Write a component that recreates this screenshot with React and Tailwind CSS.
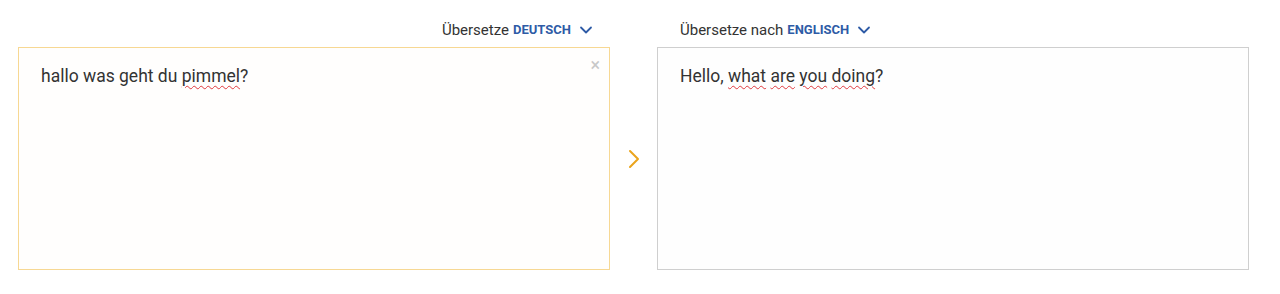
import React from "react";

const Chevron = () => (
  <svg width="14" height="14" viewBox="0 0 14 14" className="ml-[8px]" fill="none">
    <path d="M2 4.5 L7 9.5 L12 4.5" stroke="#2e5ba6" strokeWidth="1.8" strokeLinecap="round" strokeLinejoin="round" />
  </svg>
);

const Spell = ({ children }) => (
  <span className="underline decoration-wavy decoration-[#e0393e] decoration-1 underline-offset-[3px]">{children}</span>
);

export default function App() {
  return (
    <div className="w-[1280px] h-[294px] bg-white pl-[18px] pt-[20px]" style={{ fontFamily: "Roboto, 'Liberation Sans', sans-serif" }}>
      <div className="flex">
        <div className="w-[592px] flex flex-col">
          <div className="h-[20px] flex items-center justify-end pr-[17px] text-[15px] text-[#333]">
            <span>Übersetze</span>
            <span className="ml-[4px] font-bold text-[#2e5ba6] text-[13px]">DEUTSCH</span>
            <Chevron />
          </div>
          <div className="mt-[7px] h-[223px] border border-[#f7d893] bg-[#fffefd] relative px-[22px] pt-[16px]">
            <div className="text-[17.5px] leading-[24px] text-[#333]">
              hallo was geht du <Spell>pimmel</Spell>?
            </div>
            <span className="absolute right-[9px] top-[8px] text-[#c8c8c8] text-[18px] leading-[18px]">×</span>
          </div>
        </div>
        <div className="w-[47px] flex items-center justify-center pt-[27px]">
          <svg width="14" height="20" viewBox="0 0 14 20" fill="none">
            <path d="M3 2 L11 10 L3 18" stroke="#eaa41c" strokeWidth="2" strokeLinecap="round" strokeLinejoin="round" />
          </svg>
        </div>
        <div className="w-[592px] flex flex-col">
          <div className="h-[20px] flex items-center pl-[23px] text-[15px] text-[#333]">
            <span>Übersetze nach</span>
            <span className="ml-[4px] font-bold text-[#2e5ba6] text-[13px]">ENGLISCH</span>
            <Chevron />
          </div>
          <div className="mt-[7px] h-[223px] border border-[#cfcfcf] bg-[#fefefe] px-[22px] pt-[16px]">
            <div className="text-[17.5px] leading-[24px] text-[#333]">
              Hello, <Spell>what</Spell> <Spell>are</Spell> <Spell>you</Spell> <Spell>doing</Spell>?
            </div>
          </div>
        </div>
      </div>
    </div>
  );
}
